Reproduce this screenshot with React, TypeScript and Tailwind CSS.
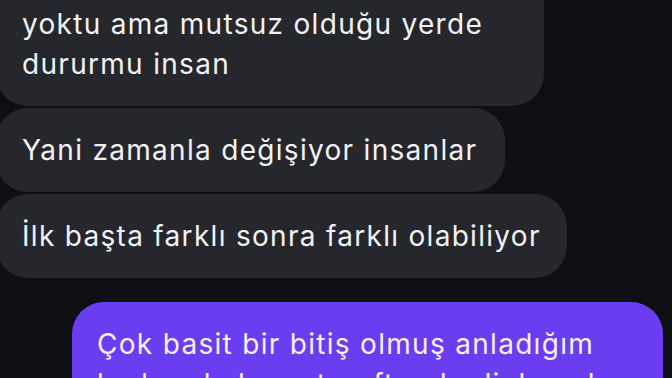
const Bubble = ({ lines, className }: { lines: string[]; className: string }) => {
      return (
            <div className={"rounded-[32px] py-[22px] text-[28px] leading-[40px] tracking-[1.3px] whitespace-nowrap " + className}>
                  {lines.map((l) => (
                        <div key={l}>{l}</div>
                  ))}
            </div>
      );
};

export default function App() {
      return (
            <div className="w-[672px] h-[378px] overflow-hidden bg-[#0e0f13] font-['Inter','Noto_Sans',sans-serif] text-[#f2f2f4]">
                  <div className="flex flex-col gap-[2px] mt-[-58px]">
                        <Bubble
                              className="self-start ml-[-4px] w-[548px] pl-[26px] pr-[20px] bg-[#26272d]"
                              lines={["Artık yolu kalmamış, gücü de", "yoktu ama mutsuz olduğu yerde", "dururmu insan"]}
                        />
                        <Bubble
                              className="self-start ml-[-4px] pl-[26px] pr-[28px] bg-[#26272d]"
                              lines={["Yani zamanla değişiyor insanlar"]}
                        />
                        <Bubble
                              className="self-start ml-[-4px] pl-[26px] pr-[26px] bg-[#26272d]"
                              lines={["İlk başta farklı sonra farklı olabiliyor"]}
                        />
                        <Bubble
                              className="self-end mt-[22px] mr-[9px] w-[591px] pl-[25px] pr-[20px] bg-[#6a3ef0] text-[#f5f0ff]"
                              lines={["Çok basit bir bitiş olmuş anladığım", "kadarıyla karşı taraftanda dinlemek"]}
                        />
                  </div>
            </div>
      );
}
